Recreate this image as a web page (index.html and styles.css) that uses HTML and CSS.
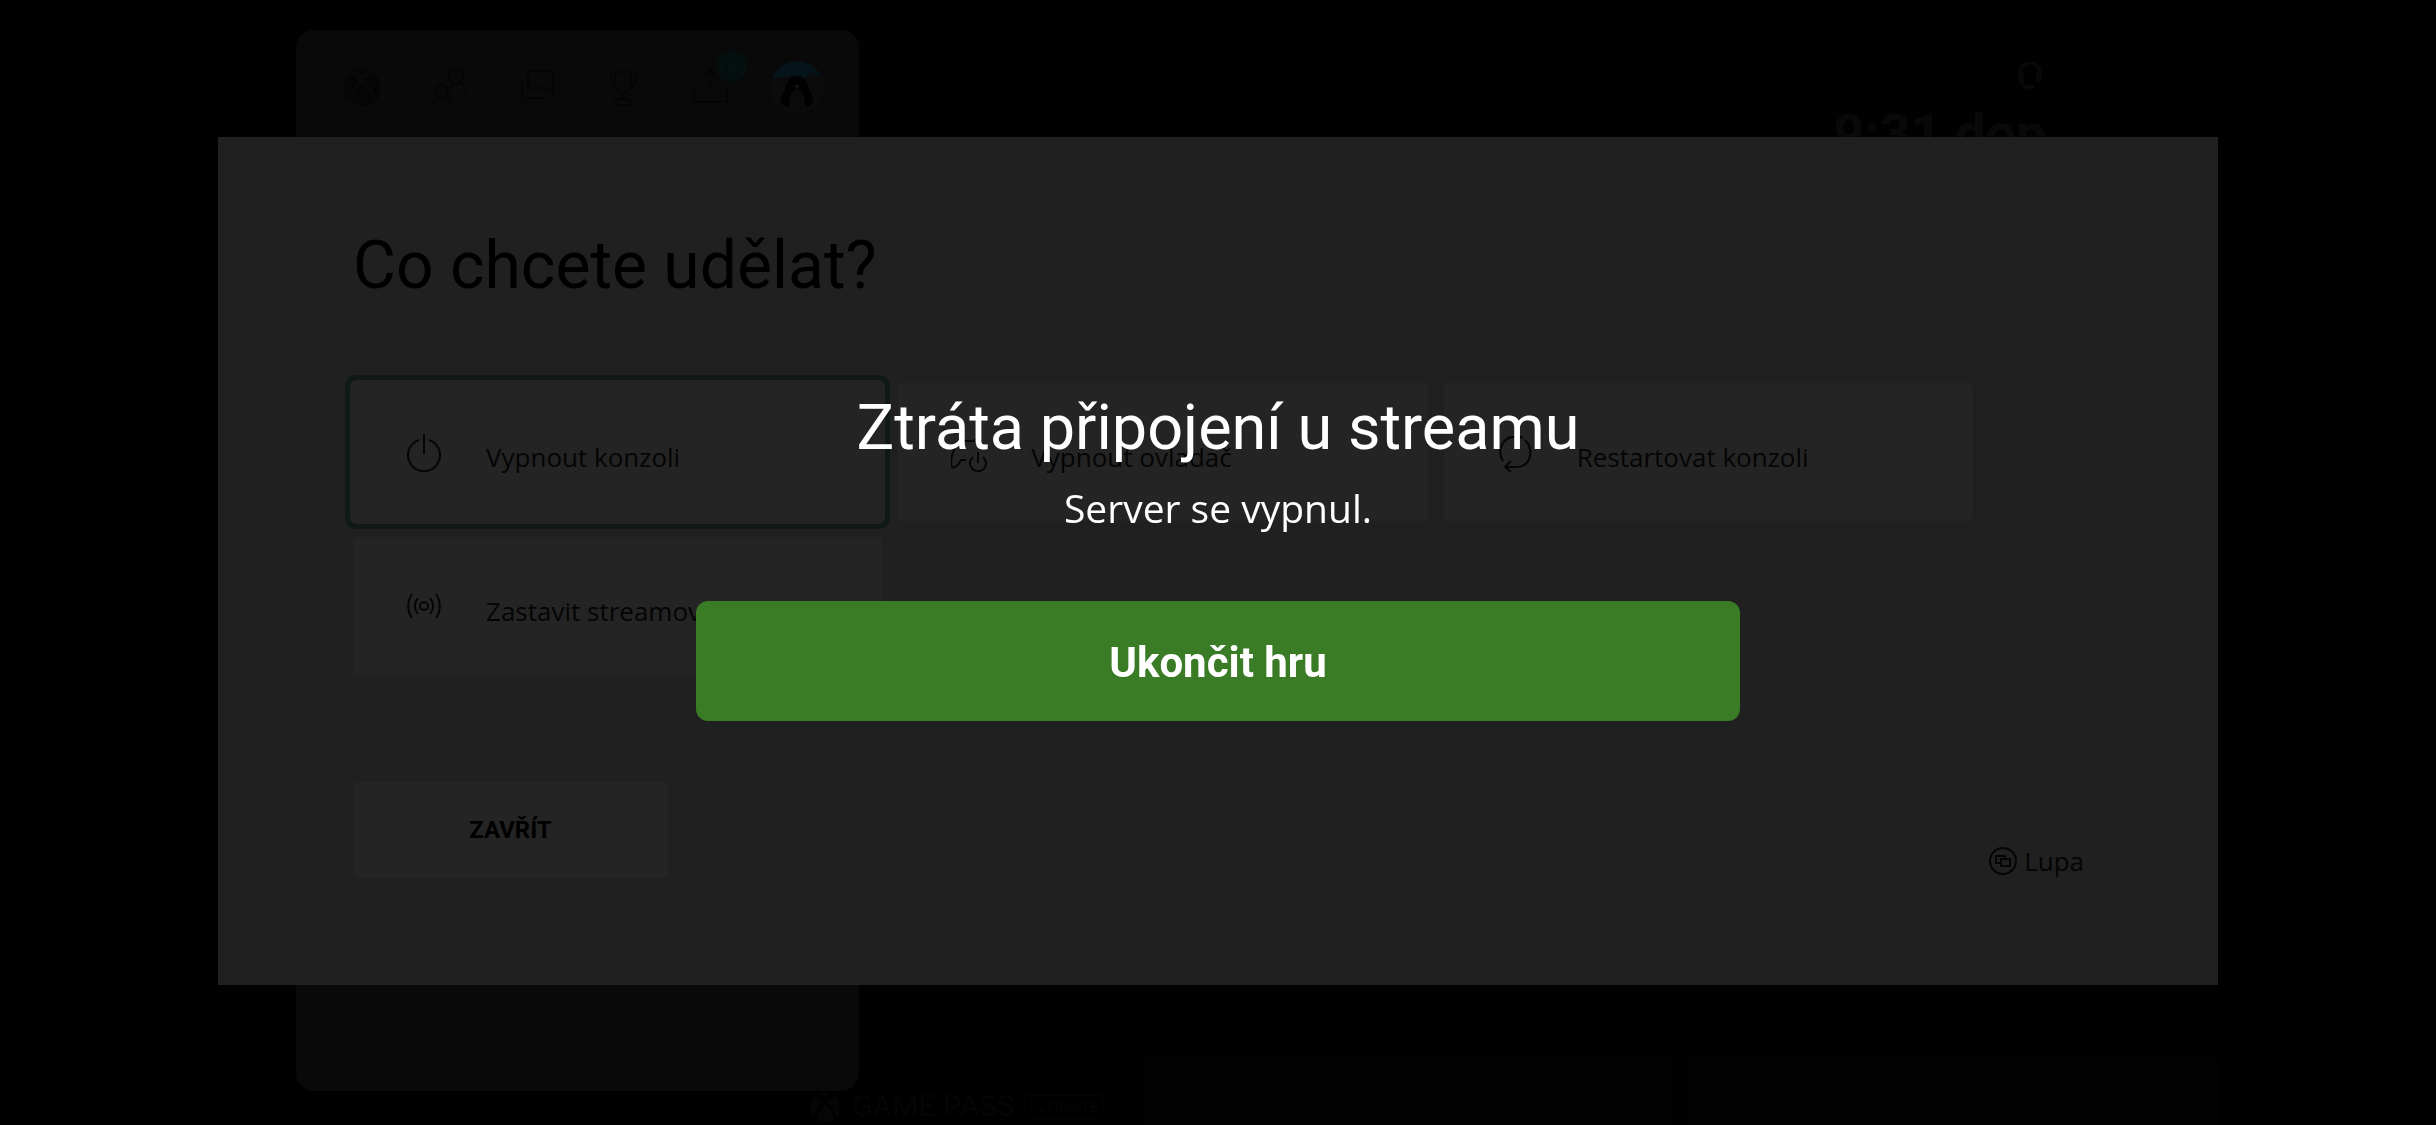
FILE: index.html
```
<!DOCTYPE html>
<html lang="cs">
<head>
  <meta charset="UTF-8" />
  <meta name="viewport" content="width=device-width, initial-scale=1.0" />
  <title>Ztráta připojení u streamu</title>
  <link rel="stylesheet" href="styles.css">
</head>
<body>
  <div class="stage">
    <div class="games">
      <div class="game pass">
        <svg class="pass-logo" viewBox="0 0 40 40"><path d="M11 4a20 20 0 0 1 18 0c-3 0-6 1-9 3-3-2-6-3-9-3zM7 7c3 0 7 3 10 6C11 20 7 28 6 34A20 20 0 0 1 7 7zm26 0c-3 0-7 3-10 6 6 7 10 15 11 21A20 20 0 0 0 33 7zM20 16c6 5 11 13 11 19-6 5-16 5-22 0 0-6 5-14 11-19z"/></svg>
        <span class="pass-name">GAME PASS</span>
        <span class="pass-tier">ULTIMATE</span>
      </div>
      <div class="game"></div>
      <div class="game"></div>
    </div>

    <div class="home">
      <nav class="guide">
        <div class="tabs">
          <svg class="tab" viewBox="0 0 40 40"><path class="solid" d="M11 4a20 20 0 0 1 18 0c-3 0-6 1-9 3-3-2-6-3-9-3zM7 7c3 0 7 3 10 6C11 20 7 28 6 34A20 20 0 0 1 7 7zm26 0c-3 0-7 3-10 6 6 7 10 15 11 21A20 20 0 0 0 33 7zM20 16c6 5 11 13 11 19-6 5-16 5-22 0 0-6 5-14 11-19z"/></svg>
          <svg class="tab" viewBox="0 0 40 40"><circle cx="27" cy="9" r="7"/><circle cx="13" cy="24" r="6"/><path d="M4 38c1-10 17-10 18 0M20 22c5-9 15-7 17 2"/></svg>
          <svg class="tab" viewBox="0 0 40 40"><path d="M12 4h25v22l-6-5H12zM6 17v20l6-6h18v-9"/></svg>
          <svg class="tab" viewBox="0 0 40 40"><path d="M12 5h16v11c0 6-4 10-8 10s-8-4-8-10zM12 8H7c0 7 2 11 6 12M28 8h5c0 7-2 11-6 12M20 26v6M14 32h12l3 6H11z"/></svg>
          <div class="share">
            <svg class="tab" viewBox="0 0 40 40"><path d="M4 18v17h33V18M20 25V3M13 10l7-7 7 7"/></svg>
            <span class="badge">155</span>
          </div>
          <svg class="avatar" viewBox="0 0 54 54">
            <circle cx="27" cy="27" r="27" fill="#0b0b0b"/>
            <path d="M2 18A27 27 0 0 1 52 18l-9-6-9 7C25 14 13 17 2 18z" fill="#04141a"/>
            <path d="M27 16c8 0 10 6 12 14 2 4 5 7 4 13l-5 4H16l-5-4c-1-6 2-9 4-13 2-8 4-14 12-14z" fill="#010101"/>
            <path d="M27 30c6 0 8 6 8 17H19c0-11 2-17 8-17z" fill="#0b0b0b"/>
            <path d="M24 25h6l-3 5z" fill="#14120a"/>
          </svg>
        </div>
      </nav>
      <div class="status">
        <svg class="headset" viewBox="0 0 24 28"><path d="M2 19v-8a10 10 0 0 1 20 0v7M3 18c0 5 3 7 8 7"/><path class="solid" d="M1 11h5v9H1zM18 11h5v9h-5zM9 23h7v4H9z"/></svg>
        <div class="clock">9:31 dop.</div>
      </div>
    </div>

    <div class="dialog">
      <h1>Co chcete udělat?</h1>
      <div class="tiles">
        <button class="tile focused">
          <svg class="icon" viewBox="0 0 36 40"><path d="M13 8a16 16 0 1 0 10 0M18 2v20"/></svg>
          <span>Vypnout konzoli</span>
        </button>
        <button class="tile">
          <svg class="icon" viewBox="0 0 36 40"><path d="M15 28H10c-3 6-7 9-9 7-3-6 2-19 6-26 3-3 5-2 6 0h10c1-2 4-3 6 0l4 8M22 25a8 8 0 1 0 10 0M27 20v11"/></svg>
          <span>Vypnout ovladač</span>
        </button>
        <button class="tile">
          <svg class="icon" viewBox="0 0 36 40"><path d="M6 29A16 16 0 0 1 14 5h10M28 8c8 7 8 26-8 27H8M14 29l-6 6 6 5M24 5l2 1"/></svg>
          <span>Restartovat konzoli</span>
        </button>
        <button class="tile">
          <svg class="icon" viewBox="0 0 36 40"><circle cx="18" cy="20" r="4"/><path d="M6 8c-5 7-5 17 0 24M12 12c-4 5-4 11 0 16M24 12c4 5 4 11 0 16M30 8c5 7 5 17 0 24"/></svg>
          <span>Zastavit streamování</span>
        </button>
      </div>
      <div class="dialog-footer">
        <button class="close">ZAVŘÍT</button>
        <div class="hint">
          <svg viewBox="0 0 30 30"><circle cx="15" cy="15" r="13"/><path d="M12 17H8v-7h9v3M13 13h9v7h-9z"/></svg>
          <span>Lupa</span>
        </div>
      </div>
    </div>
  </div>

  <div class="message">
    <h2>Ztráta připojení u streamu</h2>
    <p>Server se vypnul.</p>
    <button class="quit">Ukončit hru</button>
  </div>
</body>
</html>
```
FILE: styles.css
```
* {
  box-sizing: border-box;
}

body {
  margin: 0;
  background: #000;
  font-family: "Open Sans", "Noto Sans", sans-serif;
  overflow: hidden;
}

button {
  border: none;
  font: inherit;
  color: inherit;
  cursor: pointer;
}

svg {
  display: block;
  flex: none;
  fill: none;
  stroke: currentColor;
  stroke-width: 2;
}

.solid {
  fill: currentColor;
  stroke: none;
}

/* streamed console screen */
.stage {
  position: relative;
  height: 100vh;
  max-width: 100%;
  aspect-ratio: 16 / 9;
  margin: 0 auto;
  background: #010101;
  overflow: hidden;
}

.home {
  position: relative;
  display: flex;
  justify-content: space-between;
  height: 100%;
  padding: 30px 156px 34px 78px;
}

.guide {
  width: 563px;
  border-radius: 18px;
  background: #090909;
  color: #050505;
}

.tabs {
  display: flex;
  align-items: center;
  justify-content: space-between;
  height: 114px;
  padding: 0 35px 0 39px;
}

.tab {
  width: 54px;
  height: 40px;
}

.share {
  position: relative;
}

.badge {
  position: absolute;
  top: -17px;
  left: 33px;
  width: 32px;
  height: 32px;
  border-radius: 50%;
  background: #040e0e;
  color: #0a1212;
  font-size: 18px;
  line-height: 32px;
  text-align: center;
}

.avatar {
  width: 54px;
  height: 54px;
  stroke: none;
}

.status {
  display: flex;
  flex-direction: column;
  align-items: flex-end;
  padding-top: 32px;
  color: #090909;
}

.headset {
  width: 24px;
  height: 28px;
  margin-right: 20px;
  stroke-width: 3;
}

.clock {
  margin-top: 14px;
  font: 700 54px/60px Roboto, sans-serif;
}

.games {
  position: absolute;
  left: 28%;
  right: 0;
  bottom: 0;
  display: grid;
  grid-template-columns: 2fr 3fr 3fr;
  gap: 16px;
  height: 66px;
}

.game {
  background: #020202;
}

.pass {
  display: flex;
  align-items: flex-end;
  gap: 10px;
  padding: 0 0 2px 30px;
  background: #000;
  color: #050505;
  font-family: Roboto, sans-serif;
  white-space: nowrap;
}

.pass-logo {
  width: 34px;
  height: 32px;
  fill: currentColor;
  stroke: none;
}

.pass-name {
  font-size: 30px;
  line-height: 34px;
}

.pass-tier {
  margin-bottom: 4px;
  padding: 0 4px;
  border: 1px solid #050505;
  font-size: 15px;
  line-height: 22px;
}

.dialog {
  position: absolute;
  top: 137px;
  left: 0;
  right: 0;
  padding: 93px 134px 107px 135px;
  background: #202020;
  color: #050505;
}

h1 {
  margin: 0 0 81px;
  color: #000;
  font: 400 66px/72px Roboto, sans-serif;
}

.tiles {
  display: grid;
  grid-template-columns: repeat(3, 1fr);
  gap: 16px;
  margin-right: 111px;
}

.tile {
  display: flex;
  align-items: center;
  gap: 44px;
  height: 138px;
  padding: 0 53px;
  border-radius: 4px;
  background: #242424;
  font-size: 26px;
}

.tile span {
  padding-top: 10px;
}

.focused {
  box-shadow: 0 0 0 3px #242424, 0 0 0 8px #0f1a18;
}

.icon {
  width: 36px;
  height: 40px;
}

.dialog-footer {
  display: flex;
  align-items: flex-end;
  justify-content: space-between;
  margin-top: 107px;
}

.close {
  width: 315px;
  height: 96px;
  border-radius: 4px;
  background: #242424;
  color: #000;
  font: 700 24px/32px Roboto, sans-serif;
}

.hint {
  display: flex;
  align-items: center;
  gap: 6px;
  font-size: 26px;
  line-height: 34px;
}

.hint svg {
  width: 30px;
  height: 30px;
}

/* disconnect message over the stream */
.message {
  position: fixed;
  inset: 0;
  display: flex;
  flex-direction: column;
  align-items: center;
  justify-content: center;
  padding-bottom: 18px;
  color: #fff;
}

h2 {
  margin: 0;
  font: 400 63px/84px Roboto, sans-serif;
}

.message p {
  margin: 10px 0 65px;
  font-size: 39px;
  line-height: 56px;
}

.quit {
  width: 90%;
  max-width: 1044px;
  height: 120px;
  padding-top: 4px;
  border-radius: 12px;
  background: #3a7b25;
  font: 700 42px/48px Roboto, sans-serif;
}
```
